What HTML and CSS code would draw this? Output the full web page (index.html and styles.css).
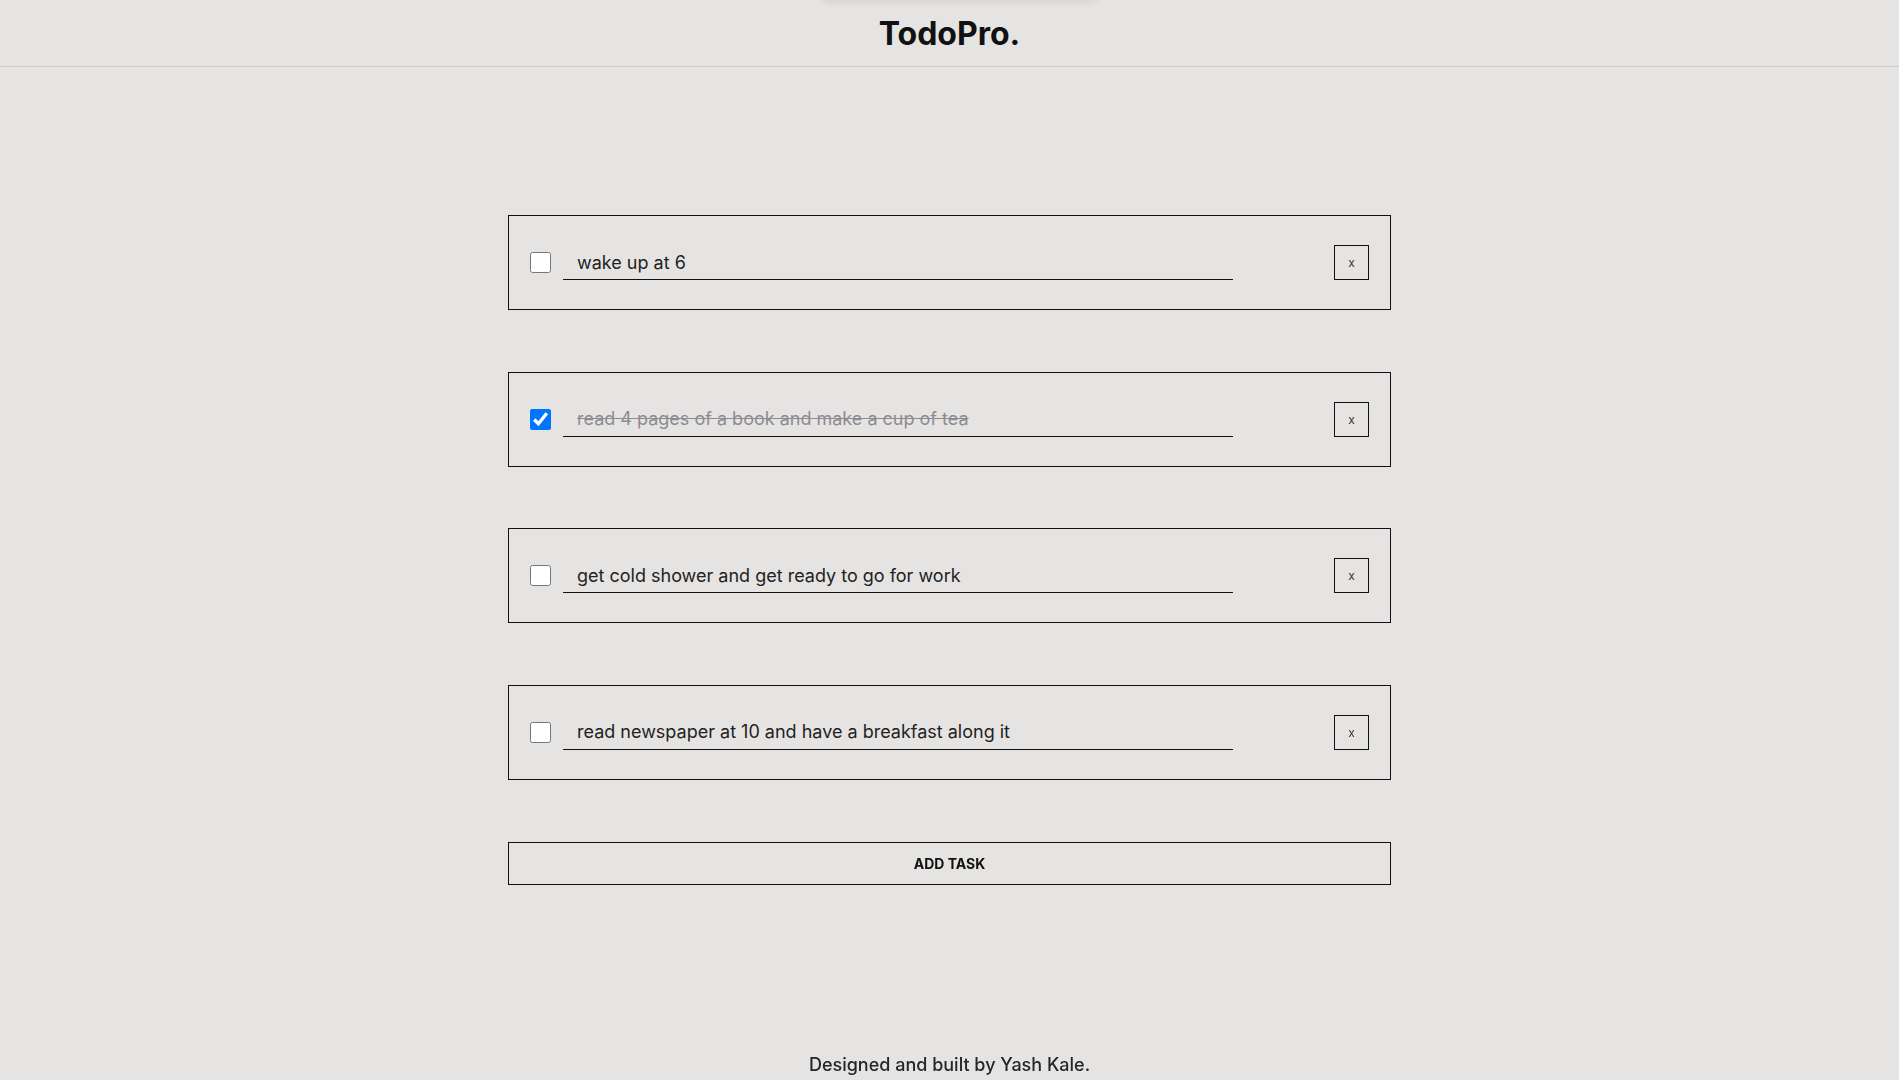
FILE: index.html
```html
<!DOCTYPE html>
<html lang="en">
<head>
<meta charset="utf-8">
<title>TodoPro.</title>
<link rel="stylesheet" href="styles.css">
</head>
<body>
<header class="header">
  <h1 class="logo">TodoPro.</h1>
</header>
<main class="main">
  <ul class="list">
    <li class="task">
      <input class="check" type="checkbox">
      <input class="text" type="text" value="wake up at 6">
      <button class="del">x</button>
    </li>
    <li class="task">
      <input class="check" type="checkbox" checked>
      <input class="text done" type="text" value="read 4 pages of a book and make a cup of tea">
      <button class="del">x</button>
    </li>
    <li class="task">
      <input class="check" type="checkbox">
      <input class="text" type="text" value="get cold shower and get ready to go for work">
      <button class="del">x</button>
    </li>
    <li class="task">
      <input class="check" type="checkbox">
      <input class="text" type="text" value="read newspaper at 10 and have a breakfast along it" autofocus>
      <button class="del">x</button>
    </li>
  </ul>
  <button class="add">ADD TASK</button>
</main>
<footer class="footer">Designed and built by Yash Kale.</footer>
</body>
</html>
```

FILE: styles.css
```css
* { box-sizing: border-box; }
html, body { margin: 0; padding: 0; }
body {
  background: #e6e4e2;
  font-family: Inter, "Noto Sans", sans-serif;
  color: #222;
  min-height: 100vh;
  display: flex;
  flex-direction: column;
  position: relative;
}
body::before {
  content: "";
  position: absolute;
  top: -12px;
  left: 823px;
  width: 273px;
  height: 12px;
  box-shadow: 0 0 10px rgba(0,0,0,0.12);
}
.header {
  height: 67px;
  border-bottom: 1px solid #cfcdcd;
  display: flex;
  align-items: center;
  justify-content: center;
}
.logo {
  margin: 0;
  font-size: 32px;
  font-weight: 700;
  color: #111;
}
.main {
  width: 883px;
  margin: 148px auto 0;
  display: flex;
  flex-direction: column;
}
.list {
  list-style: none;
  margin: 0;
  padding: 0;
  display: flex;
  flex-direction: column;
  gap: 61.5px;
}
.task {
  height: 95px;
  border: 1px solid #111;
  display: flex;
  align-items: center;
  padding: 0 21px;
}
.check {
  width: 21px;
  height: 21px;
  margin: 0 12px 0 0;
  flex: none;
}
.text {
  width: 670px;
  height: 35px;
  border: none;
  border-bottom: 1px solid #111;
  background: transparent;
  padding: 0 0 0 14px;
  font-family: Inter, "Noto Sans", sans-serif;
  font-size: 18px;
  color: #222;
  outline: none;
  caret-color: #111;
}
.text.done {
  color: #8c8b92;
  text-decoration: line-through;
}
.del {
  margin-left: auto;
  width: 35px;
  height: 35px;
  border: 1px solid #111;
  background: transparent;
  font-family: Inter, "Noto Sans", sans-serif;
  font-size: 12px;
  color: #333;
  padding: 0;
  cursor: pointer;
}
.add {
  margin-top: 62px;
  height: 43px;
  border: 1px solid #111;
  background: transparent;
  font-family: Inter, "Noto Sans", sans-serif;
  font-size: 14px;
  font-weight: 700;
  color: #111;
  cursor: pointer;
}
.footer {
  margin-top: auto;
  text-align: center;
  font-size: 18px;
  font-weight: 500;
  line-height: 22px;
  color: #25252e;
  padding-bottom: 4px;
}
```
